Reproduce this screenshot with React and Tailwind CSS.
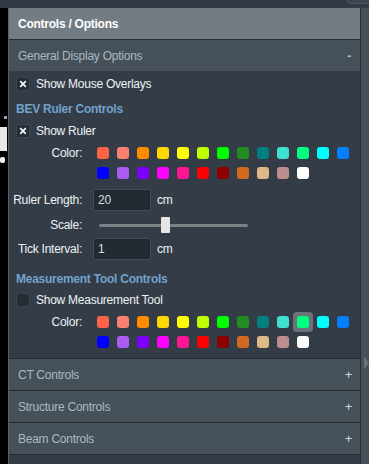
import React, { useState } from "react";

const ROW_ONE = [
  "bg-[#ff6347]",
  "bg-[#fa8072]",
  "bg-[#ff8c00]",
  "bg-[#ffd700]",
  "bg-[#ffff00]",
  "bg-[#bfff00]",
  "bg-[#00ff00]",
  "bg-[#228b22]",
  "bg-[#008080]",
  "bg-[#40e0d0]",
  "bg-[#00ff7f]",
  "bg-[#00ffff]",
  "bg-[#0080ff]",
];

const ROW_TWO = [
  "bg-[#0000ff]",
  "bg-[#a95cf2]",
  "bg-[#8000ff]",
  "bg-[#ff00ff]",
  "bg-[#ff1493]",
  "bg-[#ff0000]",
  "bg-[#8b0000]",
  "bg-[#d2691e]",
  "bg-[#deb887]",
  "bg-[#bc8f8f]",
  "bg-[#ffffff]",
];

const SWATCHES = [...ROW_ONE, ...ROW_TWO];

function Checkbox({ checked }) {
  return (
    <span className="w-[14px] h-[14px] shrink-0 rounded-[2px] bg-[#252c33] border border-[#3e464f] flex items-center justify-center">
      {checked && (
        <svg width="8" height="8" viewBox="0 0 8 8">
          <path d="M1.2 1.2 L6.8 6.8 M6.8 1.2 L1.2 6.8" stroke="#f2f2f2" strokeWidth="1.8" />
        </svg>
      )}
    </span>
  );
}

function CheckRow({ checked, label, className }) {
  return (
    <div className={"flex items-center h-[14px] pl-[7px] gap-[6px] " + className}>
      <Checkbox checked={checked} />
      <span className="text-[#eef1f4]">{label}</span>
    </div>
  );
}

function Heading({ children, className }) {
  return (
    <div className={"h-[16px] flex items-center pl-[7px] font-bold text-[#72a2cd] " + className}>
      {children}
    </div>
  );
}

function Label({ children }) {
  return <div className="w-[73px] shrink-0 text-right text-[#eef1f4]">{children}</div>;
}

function ColorRow({ className, selected }) {
  const [picked, setPicked] = useState(selected);
  return (
    <div className={"flex " + className}>
      <div className="w-[73px] shrink-0 h-[20px] flex items-center justify-end text-[#eef1f4]">
        Color:
      </div>
      <div className="ml-[11px] grid grid-cols-[repeat(13,20px)] auto-rows-[20px]">
        {SWATCHES.map((c, i) => (
          <button
            key={c}
            onClick={() => setPicked(i)}
            className={
              "w-[20px] h-[20px] flex items-center justify-center rounded-[4px] " +
              (picked === i ? "bg-[#6c7279]" : "")
            }
          >
            <span className={"w-[12px] h-[12px] rounded-[3px] " + c} />
          </button>
        ))}
      </div>
    </div>
  );
}

function NumberRow({ label, value, className }) {
  return (
    <div className={"flex items-center h-[22px] " + className}>
      <Label>{label}</Label>
      <div className="ml-[11px] w-[58px] h-[22px] bg-[#232a31] border border-[#434b54] rounded-[2px] flex items-center pl-[4px] text-[#d3dde6]">
        {value}
      </div>
      <span className="ml-[6px] text-[#eef1f4]">cm</span>
    </div>
  );
}

function Collapsed({ title }) {
  return (
    <div className="border-t border-[#262c33] h-[32px] bg-[#465059] flex items-center justify-between pl-[9px] pr-[8px]">
      <span className="text-[#a9b8c6]">{title}</span>
      <span className="text-[#c9d3dc] text-[13px]">+</span>
    </div>
  );
}

export default function App() {
  return (
    <div
      className="w-[369px] h-[464px] overflow-hidden bg-[#323a44] flex flex-col text-[12px] tracking-[-0.25px] leading-none"
      style={{ fontFamily: '"Liberation Sans", Arial, sans-serif' }}
    >
      {/* top strip */}
      <div className="h-[8px] shrink-0 flex justify-end">
        <div className="w-[22px] h-[4px] bg-[#3d454e] rounded-bl-[4px] border-b border-l border-[#4a525b]" />
      </div>

      <div className="flex flex-1 min-h-0">
        {/* viewer edge */}
        <div className="w-[8px] bg-black flex flex-col">
          <div className="h-[108px]" />
          <div className="w-[3px] h-[3px] bg-[#9aa0a6] ml-[4px]" />
          <div className="h-[8px]" />
          <div className="w-[7px] h-[24px] bg-[#e8e8e8] ml-0" />
          <div className="h-[6px]" />
          <div className="w-[5px] h-[6px] bg-[#f0f0f0] rounded-[2px]" />
        </div>
        <div className="w-px bg-[#5a6169]" />

        {/* panel */}
        <div className="w-[351px] flex flex-col bg-[#343d47]">
          <div className="h-[31px] bg-[#737b83] flex items-center pl-[9px] font-bold text-white border-b border-[#262c33] box-content">
            Controls / Options
          </div>
          <div className="h-[31px] bg-[#465059] flex items-center justify-between pl-[9px] pr-[9px]">
            <span className="text-[#a9b8c6]">General Display Options</span>
            <span className="text-[#a9c4d8] font-bold">-</span>
          </div>

          <div className="flex flex-col pt-[6px] pb-[6px]">
            <CheckRow checked label="Show Mouse Overlays" className="" />
            <Heading className="mt-[10px]">BEV Ruler Controls</Heading>
            <CheckRow checked label="Show Ruler" className="mt-[7px]" />
            <ColorRow className="mt-[5px]" selected={-1} />
            <NumberRow label="Ruler Length:" value="20" className="mt-[6px]" />
            <div className="flex items-center h-[16px] mt-[6px]">
              <Label>Scale:</Label>
              <div className="ml-[17px] relative w-[149px] h-[16px] flex items-center">
                <div className="w-full h-[3px] bg-[#7b8086] rounded-full" />
                <div className="absolute left-[62px] top-0 w-[9px] h-[16px] bg-[#e6e6e6] rounded-[1px]" />
              </div>
            </div>
            <NumberRow label="Tick Interval:" value="1" className="mt-[5px]" />
            <Heading className="mt-[11px]">Measurement Tool Controls</Heading>
            <CheckRow label="Show Measurement Tool" className="mt-[6px]" />
            <ColorRow className="mt-[5px]" selected={10} />
          </div>

          <Collapsed title="CT Controls" />
          <Collapsed title="Structure Controls" />
          <Collapsed title="Beam Controls" />
          <div className="border-t border-[#262c33] flex-1" />
        </div>

        <div className="w-px bg-[#262c33]" />
        {/* side strip */}
        <div className="w-[8px] bg-[#474f58] flex flex-col">
          <div className="h-[349px]" />
          <svg width="8" height="12" viewBox="0 0 8 12">
            <path d="M3 0 L8 6 L3 12 Z" fill="#6b7178" />
          </svg>
        </div>
      </div>
    </div>
  );
}
